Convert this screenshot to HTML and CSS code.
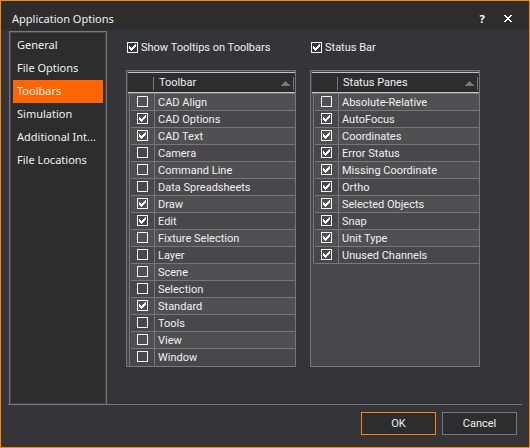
FILE: index.html
```html
<!DOCTYPE html>
<html lang="en">
<head>
    <meta charset="UTF-8">
    <meta name="viewport" content="width=device-width, initial-scale=1.0">
    <title>Application Options</title>
    <link rel="stylesheet" href="styles.css">
</head>
<body>
    <header class="title-bar">
        <h1>Application Options</h1>
        <button class="title-button help" type="button" aria-label="Help">?</button>
        <button class="title-button" type="button" aria-label="Close">
            <svg width="8" height="7" viewBox="0 0 8 7"><path d="M0 0h2v1h1v1h2V1h1V0h2v1H7v1H6v1H5v1h1v1h1v1h1v1H6V6H5V5H3v1H2v1H0V6h1V5h1V4h1V3H2V2H1V1H0z" fill="#fff" shape-rendering="crispEdges"/></svg>
        </button>
    </header>

    <main class="options">
        <nav class="sidebar">
            <a href="#general">General</a>
            <a href="#file-options">File Options</a>
            <a href="#toolbars" class="active">Toolbars</a>
            <a href="#simulation">Simulation</a>
            <a href="#additional">Additional Int...</a>
            <a href="#file-locations">File Locations</a>
        </nav>

        <div class="content">
            <section class="column">
                <label class="toggle"><input type="checkbox" checked>Show Tooltips on Toolbars</label>
                <div class="panel">
                    <table class="full">
                        <thead>
                            <tr>
                                <th class="check"></th>
                                <th class="name"><span class="heading">Toolbar<svg class="sort" width="9" height="5" viewBox="0 0 9 5"><path d="M4 0h1v1h1v1h1v1h1v1h1v1H0V4h1V3h1V2h1V1h1z"/></svg></span></th>
                            </tr>
                        </thead>
                        <tbody>
                            <tr><td class="check"><input type="checkbox" id="cad-align"></td><td><label for="cad-align">CAD Align</label></td></tr>
                            <tr><td class="check"><input type="checkbox" id="cad-options" checked></td><td><label for="cad-options">CAD Options</label></td></tr>
                            <tr><td class="check"><input type="checkbox" id="cad-text" checked></td><td><label for="cad-text">CAD Text</label></td></tr>
                            <tr><td class="check"><input type="checkbox" id="camera"></td><td><label for="camera">Camera</label></td></tr>
                            <tr><td class="check"><input type="checkbox" id="command-line"></td><td><label for="command-line">Command Line</label></td></tr>
                            <tr><td class="check"><input type="checkbox" id="data-spreadsheets"></td><td><label for="data-spreadsheets">Data Spreadsheets</label></td></tr>
                            <tr><td class="check"><input type="checkbox" id="draw" checked></td><td><label for="draw">Draw</label></td></tr>
                            <tr><td class="check"><input type="checkbox" id="edit" checked></td><td><label for="edit">Edit</label></td></tr>
                            <tr><td class="check"><input type="checkbox" id="fixture-selection"></td><td><label for="fixture-selection">Fixture Selection</label></td></tr>
                            <tr><td class="check"><input type="checkbox" id="layer"></td><td><label for="layer">Layer</label></td></tr>
                            <tr><td class="check"><input type="checkbox" id="scene"></td><td><label for="scene">Scene</label></td></tr>
                            <tr><td class="check"><input type="checkbox" id="selection"></td><td><label for="selection">Selection</label></td></tr>
                            <tr><td class="check"><input type="checkbox" id="standard" checked></td><td><label for="standard">Standard</label></td></tr>
                            <tr><td class="check"><input type="checkbox" id="tools"></td><td><label for="tools">Tools</label></td></tr>
                            <tr><td class="check"><input type="checkbox" id="view"></td><td><label for="view">View</label></td></tr>
                            <tr><td class="check"><input type="checkbox" id="window"></td><td><label for="window">Window</label></td></tr>
                        </tbody>
                    </table>
                </div>
            </section>

            <section class="column">
                <label class="toggle"><input type="checkbox" checked>Status Bar</label>
                <div class="panel">
                    <table>
                        <thead>
                            <tr>
                                <th class="check"></th>
                                <th class="name"><span class="heading">Status Panes<svg class="sort" width="9" height="5" viewBox="0 0 9 5"><path d="M4 0h1v1h1v1h1v1h1v1h1v1H0V4h1V3h1V2h1V1h1z"/></svg></span></th>
                            </tr>
                        </thead>
                        <tbody>
                            <tr><td class="check"><input type="checkbox" id="absolute-relative"></td><td><label for="absolute-relative">Absolute-Relative</label></td></tr>
                            <tr><td class="check"><input type="checkbox" id="autofocus" checked></td><td><label for="autofocus">AutoFocus</label></td></tr>
                            <tr><td class="check"><input type="checkbox" id="coordinates" checked></td><td><label for="coordinates">Coordinates</label></td></tr>
                            <tr><td class="check"><input type="checkbox" id="error-status" checked></td><td><label for="error-status">Error Status</label></td></tr>
                            <tr><td class="check"><input type="checkbox" id="missing-coordinate" checked></td><td><label for="missing-coordinate">Missing Coordinate</label></td></tr>
                            <tr><td class="check"><input type="checkbox" id="ortho" checked></td><td><label for="ortho">Ortho</label></td></tr>
                            <tr><td class="check"><input type="checkbox" id="selected-objects" checked></td><td><label for="selected-objects">Selected Objects</label></td></tr>
                            <tr><td class="check"><input type="checkbox" id="snap" checked></td><td><label for="snap">Snap</label></td></tr>
                            <tr><td class="check"><input type="checkbox" id="unit-type" checked></td><td><label for="unit-type">Unit Type</label></td></tr>
                            <tr><td class="check"><input type="checkbox" id="unused-channels" checked></td><td><label for="unused-channels">Unused Channels</label></td></tr>
                        </tbody>
                    </table>
                </div>
            </section>
        </div>
    </main>

    <footer class="buttons">
        <button class="default" type="button">OK</button>
        <button type="button">Cancel</button>
    </footer>
</body>
</html>
```
FILE: styles.css
```css
* {
    box-sizing: border-box;
}
body {
    margin: 0;
    min-height: 100vh;
    display: flex;
    flex-direction: column;
    border: 1px solid #ff8800;
    background: #353438;
    color: #f0f0f0;
    font: 11px/16px Roboto, "Liberation Sans", sans-serif;
}
.title-bar {
    display: flex;
    align-items: center;
    height: 29px;
    padding: 6px 8px 0 11px;
    background: #2d2d2e;
    font-family: "Noto Sans", sans-serif;
}
.title-bar h1 {
    flex: 1;
    margin: 0;
    font-size: 11px;
    font-weight: normal;
}
.title-button {
    display: flex;
    align-items: center;
    justify-content: center;
    width: 26px;
    height: 16px;
    padding: 0;
    border: none;
    background: none;
    color: #fff;
}
.help {
    font: bold 11px/16px "Noto Sans", sans-serif;
}
.options {
    flex: 1;
    display: flex;
    margin: 0 7px;
    padding: 1px 0 0 1px;
    border-bottom: 1px solid #77777a;
}
.sidebar {
    width: 98px;
    padding: 2px;
    border: 1px solid #77777a;
    border-bottom: none;
    box-shadow: inset 0 0 0 1px #454548;
    background: #2d2d2e;
    font-family: "Noto Sans", sans-serif;
}
.sidebar a {
    display: block;
    height: 23px;
    margin: 0 1px;
    padding-left: 4px;
    line-height: 22px;
    color: #f0f0f0;
    text-decoration: none;
    white-space: nowrap;
}
.sidebar .active {
    background: #ff6600;
}
.content {
    flex: 1;
    display: grid;
    grid-template-columns: 1fr 1fr;
    gap: 14px;
    align-self: flex-start;
    padding: 9px 42px 0 19px;
}
.column {
    display: flex;
    flex-direction: column;
    gap: 14px;
}
.toggle {
    display: flex;
    align-items: center;
    gap: 3px;
    height: 16px;
    padding-left: 1px;
    white-space: nowrap;
}
input[type="checkbox"] {
    appearance: none;
    display: block;
    width: 11px;
    height: 11px;
    margin: 0 0 1px;
    border: 1px solid #f4f4f4;
}
input[type="checkbox"]:checked {
    background: url('data:image/svg+xml,<svg xmlns="http://www.w3.org/2000/svg" width="9" height="9" viewBox="0 0 9 9"><path d="M1 3h1v1h1v1h1V4h1V3h1V2h1V1h1v3H7v1H6v1H5v1H4v1H3V7H2V6H1z" fill="white" shape-rendering="crispEdges"/></svg>') no-repeat;
}
.panel {
    flex: 1;
    padding: 1px 0 0 1px;
    border: 1px solid #77777a;
    background: #48474b;
}
table {
    width: 100%;
    border-spacing: 0;
    table-layout: fixed;
}
th {
    height: 22px;
    padding: 0;
    border-top: 1px solid #c4c4c6;
    border-bottom: 1px solid #77777a;
    box-shadow: inset 0 -1px #c4c4c6;
    background: #2d2d2e;
    font-weight: normal;
    text-align: left;
}
th.check {
    width: 27px;
}
.heading {
    display: flex;
    align-items: center;
    height: 13px;
    margin: 0 1px 0 -2px;
    padding: 0 3px 0 5px;
    border-left: 1px solid #77777a;
    border-right: 1px solid #77777a;
}
.sort {
    margin-left: auto;
    fill: #77777a;
    shape-rendering: crispEdges;
}
td {
    height: 17px;
    padding: 0 0 0 3px;
    border-bottom: 1px solid #77777a;
    vertical-align: top;
    white-space: nowrap;
}
/* row indicator on the left, row line starts after it */
td.check {
    padding: 2px 0 0 9px;
    border-right: 1px solid #77777a;
    border-bottom: none;
    background:
        linear-gradient(to right, #48474b 1px, #77777a 1px 2px, #48474b 2px) 0 0 / 3px 100% no-repeat,
        linear-gradient(#77777a, #77777a) 0 100% / 100% 1px no-repeat;
}
td label {
    display: block;
    height: 16px;
    line-height: 18px;
}
tbody tr:nth-child(odd) {
    background: #505053;
}
.full tr:last-child td {
    border-bottom: none;
}
.full tr:last-child td.check {
    background-size: 3px 100%, 0 0;
}
.buttons {
    display: flex;
    justify-content: flex-end;
    gap: 6px;
    padding: 7px 12px 12px;
}
.buttons button {
    width: 75px;
    height: 23px;
    padding: 0;
    border: 1px solid #77777a;
    background: #2d2d2e;
    color: #f0f0f0;
    font: inherit;
}
.buttons .default {
    border-color: #ff8800;
}
```
